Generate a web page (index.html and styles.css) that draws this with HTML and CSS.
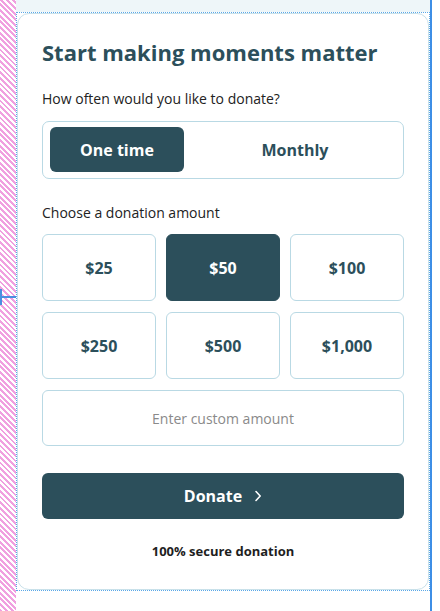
FILE: index.html
```html
<!DOCTYPE html>
<html lang="en">
<head>
<meta charset="utf-8">
<title>Donate</title>
<link rel="stylesheet" href="styles.css">
</head>
<body>
<div class="hatch"></div>
<div class="marker"><span class="marker-v"></span><span class="marker-h"></span></div>
<div class="main">
  <div class="topband"></div>
  <div class="frame">
    <div class="card">
      <h1 class="title">Start making moments matter</h1>
      <p class="label q1">How often would you like to donate?</p>
      <div class="toggle">
        <button class="tog active">One time</button>
        <button class="tog monthly">Monthly</button>
      </div>
      <p class="label q2">Choose a donation amount</p>
      <div class="amounts">
        <button class="amt">$25</button>
        <button class="amt active">$50</button>
        <button class="amt">$100</button>
        <button class="amt">$250</button>
        <button class="amt">$500</button>
        <button class="amt">$1,000</button>
      </div>
      <div class="custom">Enter custom amount</div>
      <button class="donate">Donate
        <svg class="chev" width="8" height="12" viewBox="0 0 8 12"><path d="M2 1.5 L6.2 6 L2 10.5" fill="none" stroke="#fff" stroke-width="1.6" stroke-linecap="round" stroke-linejoin="round"/></svg>
      </button>
      <p class="secure">100% secure donation</p>
    </div>
  </div>
</div>
<div class="rail"></div>
<div class="edge"></div>
</body>
</html>
```

FILE: styles.css
```css
* { box-sizing: border-box; }
html, body { margin: 0; padding: 0; }
body {
  width: 440px;
  height: 611px;
  overflow: hidden;
  display: flex;
  background: #ffffff;
  font-family: "Open Sans", "Noto Sans", sans-serif;
  color: #222222;
  position: relative;
}
.hatch {
  width: 16px;
  height: 611px;
  flex: none;
  background: repeating-linear-gradient(45deg, #f0a0e0 0px, #f0a0e0 2px, #ffffff 2px, #ffffff 4px);
}
.marker { position: absolute; left: 0; top: 289px; width: 16px; height: 16px; }
.marker-v { position: absolute; left: 0; top: 0; width: 2px; height: 16px; background: #4a8fe0; }
.marker-h { position: absolute; left: 0; top: 7px; width: 16px; height: 2px; background: #4a8fe0; }
.main { width: 414px; flex: none; display: flex; flex-direction: column; }
.topband { height: 12px; background: #eef6f9; }
.frame {
  border: 1px dotted #5aa8e8;
  background: #ffffff;
}
.card {
  border: 1px solid #c9e1ea;
  border-radius: 12px;
  padding: 23px 24px 28px 24px;
  display: flex;
  flex-direction: column;
}
.title {
  margin: 0;
  font-size: 22px;
  line-height: 30px;
  font-weight: 700;
  color: #2c4f5b;
}
.label { margin: 0; font-size: 14px; line-height: 20px; color: #222; }
.q1 { margin-top: 22px; }
.q2 { margin-top: 24px; }
.toggle {
  margin-top: 12px;
  height: 58px;
  border: 1px solid #b9d9e4;
  border-radius: 7px;
  padding: 5px 6px 6px 7px;
  display: grid;
  grid-template-columns: 134px 1fr;
}
button {
  font-family: inherit;
  border: none;
  background: none;
  margin: 0;
  cursor: pointer;
}
.tog {
  font-size: 16px;
  font-weight: 700;
  color: #2c4f5b;
  border-radius: 6px;
  padding: 0;
}
.tog.monthly { padding-left: 9px; }
.tog.active { background: #2c4f5b; color: #ffffff; }
.amounts {
  margin-top: 11px;
  display: grid;
  grid-template-columns: repeat(3, 1fr);
  grid-auto-rows: 67px;
  column-gap: 10px;
  row-gap: 11px;
}
.amt {
  border: 1px solid #b9d9e4;
  border-radius: 6px;
  background: #fff;
  font-size: 16px;
  font-weight: 700;
  color: #2c4f5b;
}
.amt.active { background: #2c4f5b; border-color: #2c4f5b; color: #fff; }
.custom {
  margin-top: 11px;
  height: 56px;
  border: 1px solid #b9d9e4;
  border-radius: 6px;
  display: flex;
  align-items: center;
  justify-content: center;
  font-size: 14px;
  color: #8a8a8a;
}
.donate {
  margin-top: 27px;
  height: 46px;
  border-radius: 6px;
  background: #2c4f5b;
  color: #ffffff;
  font-size: 16px;
  font-weight: 700;
  display: flex;
  align-items: center;
  justify-content: center;
  gap: 12px;
  padding-left: 6px;
}
.chev { display: block; }
.secure {
  margin: 22px 0 0;
  text-align: center;
  font-size: 13px;
  line-height: 20px;
  font-weight: 700;
  color: #1e1e1e;
}
.rail { width: 2px; flex: none; height: 611px; background: #3d8ee6; }
.edge { width: 8px; flex: none; height: 611px; background: #ffffff; }
```
